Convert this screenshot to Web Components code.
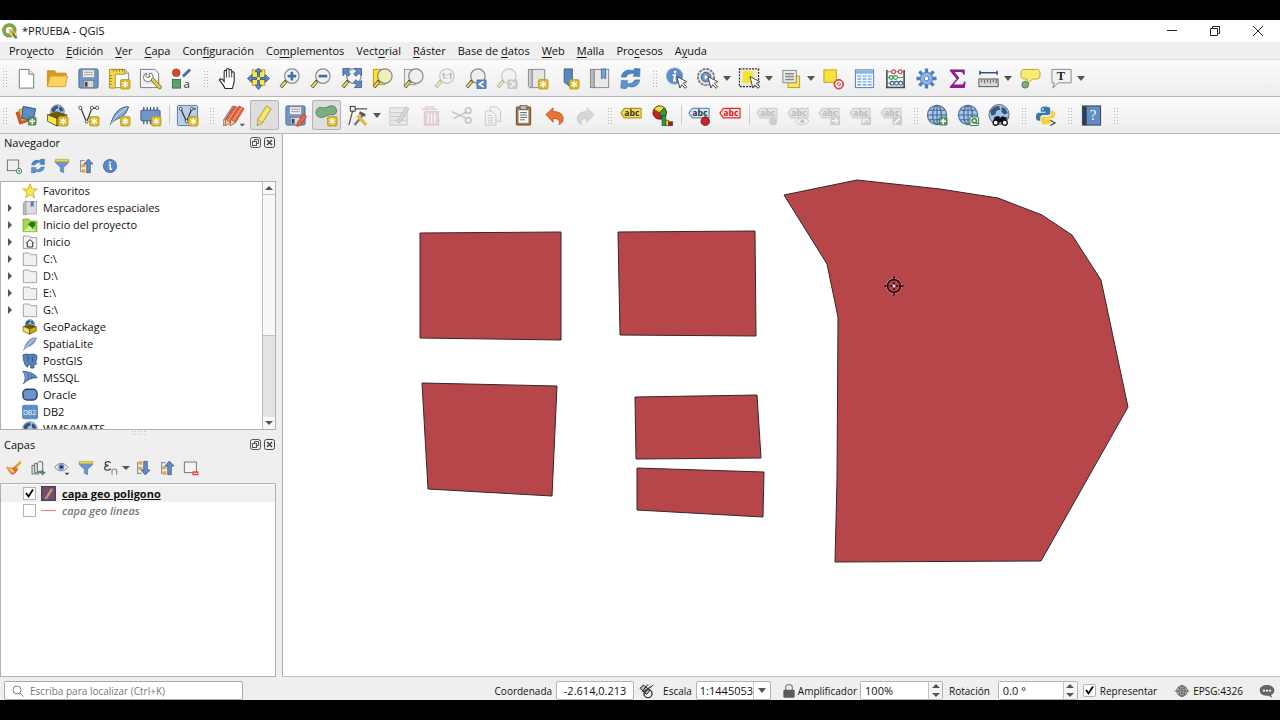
<!DOCTYPE html>
<html lang="es">
<head>
<meta charset="utf-8">
<title>*PRUEBA - QGIS</title>
<style>
  html, body { height: 100%; }
  body { margin: 0; background: #000; font: 11px/16px "Open Sans", "Noto Sans", sans-serif; color: #111; }
</style>
</head>
<body>
<qgis-window>
  <title-bar slot="title">*PRUEBA - QGIS</title-bar>
  <menu-bar slot="menu"></menu-bar>

  <tool-bar slot="tools" label="Proyecto, navegación y atributos">
    <tool-handle first></tool-handle>
    <tool-button icon="newfile" label="Nuevo proyecto"></tool-button>
    <tool-button icon="open" label="Abrir proyecto"></tool-button>
    <tool-button icon="save" label="Guardar proyecto"></tool-button>
    <tool-button icon="layout" label="Nuevo diseño de impresión"></tool-button>
    <tool-button icon="layoutmgr" label="Administrador de diseños"></tool-button>
    <tool-button icon="style" label="Administrador de estilos"></tool-button>
    <tool-handle></tool-handle>
    <tool-button icon="hand" label="Desplazar mapa"></tool-button>
    <tool-button icon="pansel" label="Desplazar a la selección"></tool-button>
    <tool-button icon="zoomin" label="Acercar zum"></tool-button>
    <tool-button icon="zoomout" label="Alejar zum"></tool-button>
    <tool-button icon="zoomfull" label="Zum general"></tool-button>
    <tool-button icon="zoomsel" label="Zum a la selección"></tool-button>
    <tool-button icon="zoomlayer" label="Zum a la capa"></tool-button>
    <tool-button icon="zoomnative" label="Zum a la resolución nativa" disabled></tool-button>
    <tool-button icon="zoomlast" label="Zum anterior"></tool-button>
    <tool-button icon="zoomnext" label="Zum siguiente" disabled></tool-button>
    <tool-button icon="newmap" label="Nueva vista de mapa"></tool-button>
    <tool-button icon="newmark" label="Nuevo marcador espacial"></tool-button>
    <tool-button icon="marks" label="Mostrar marcadores"></tool-button>
    <tool-button icon="refresh" label="Actualizar"></tool-button>
    <tool-handle></tool-handle>
    <tool-button icon="identify" label="Identificar objetos"></tool-button>
    <tool-button icon="action" label="Ejecutar acción" menu></tool-button>
    <tool-button icon="select" label="Seleccionar objetos" menu></tool-button>
    <tool-button icon="selform" label="Seleccionar por valor" menu></tool-button>
    <tool-button icon="deselect" label="Deseleccionar todo"></tool-button>
    <tool-button icon="table" label="Abrir tabla de atributos"></tool-button>
    <tool-button icon="abacus" label="Calculadora de campos"></tool-button>
    <tool-button icon="gear" label="Caja de herramientas"></tool-button>
    <tool-button icon="sigma" label="Resumen estadístico"></tool-button>
    <tool-button icon="measure" label="Medir línea" menu></tool-button>
    <tool-button icon="tips" label="Avisos del mapa"></tool-button>
    <tool-button icon="annot" label="Anotación de texto" menu></tool-button>
  </tool-bar>

  <tool-bar slot="tools" label="Fuentes de datos, digitalización y etiquetas">
    <tool-handle first></tool-handle>
    <tool-button icon="datasrc" label="Administrador de fuentes de datos"></tool-button>
    <tool-button icon="newgpkg" label="Nueva capa GeoPackage"></tool-button>
    <tool-button icon="newshp" label="Nueva capa shape"></tool-button>
    <tool-button icon="newspl" label="Nueva capa SpatiaLite"></tool-button>
    <tool-button icon="newmem" label="Nueva capa temporal"></tool-button>
    <tool-split></tool-split>
    <tool-button icon="newvirt" label="Nueva capa virtual"></tool-button>
    <tool-handle></tool-handle>
    <tool-button icon="edits" label="Ediciones actuales"></tool-button>
    <tool-button icon="pencil" label="Conmutar edición" checked></tool-button>
    <tool-button icon="saveedit" label="Guardar cambios de la capa"></tool-button>
    <tool-button icon="addpoly" label="Añadir polígono" checked></tool-button>
    <tool-button icon="vertex" label="Herramienta de vértices" menu></tool-button>
    <tool-button icon="modattr" label="Modificar atributos" disabled></tool-button>
    <tool-button icon="trash" label="Borrar lo seleccionado" disabled></tool-button>
    <tool-button icon="cut" label="Cortar objetos" disabled></tool-button>
    <tool-button icon="copy" label="Copiar objetos" disabled></tool-button>
    <tool-button icon="paste" label="Pegar objetos"></tool-button>
    <tool-button icon="undo" label="Deshacer"></tool-button>
    <tool-button icon="redo" label="Rehacer" disabled></tool-button>
    <tool-handle></tool-handle>
    <tool-button icon="label" label="Opciones de etiquetado"></tool-button>
    <tool-button icon="diagram" label="Opciones de diagramas"></tool-button>
    <tool-split></tool-split>
    <tool-button icon="labelpin" label="Resaltar etiquetas fijadas"></tool-button>
    <tool-button icon="labelred" label="Etiquetas sin colocar"></tool-button>
    <tool-split></tool-split>
    <tool-button icon="lpin" label="Fijar etiquetas" disabled></tool-button>
    <tool-button icon="leye" label="Mostrar etiquetas" disabled></tool-button>
    <tool-button icon="lmove" label="Mover etiqueta" disabled></tool-button>
    <tool-button icon="lrot" label="Rotar etiqueta" disabled></tool-button>
    <tool-button icon="ledit" label="Cambiar etiqueta" disabled></tool-button>
    <tool-handle></tool-handle>
    <tool-button icon="webadd" label="MetaSearch: añadir"></tool-button>
    <tool-button icon="websearch" label="MetaSearch: buscar"></tool-button>
    <tool-button icon="metasearch" label="MetaSearch"></tool-button>
    <tool-handle></tool-handle>
    <tool-button icon="python" label="Consola de Python"></tool-button>
    <tool-handle></tool-handle>
    <tool-button icon="help" label="Ayuda"></tool-button>
    <tool-handle></tool-handle>
  </tool-bar>

  <dock-panel slot="docks" heading="Navegador" class="browser">
    <mini-button slot="tools" icon="addlayer" label="Añadir capas"></mini-button>
    <mini-button slot="tools" icon="refresh" label="Actualizar"></mini-button>
    <mini-button slot="tools" icon="filter" label="Filtrar"></mini-button>
    <mini-button slot="tools" icon="collapse" label="Comprimir todo"></mini-button>
    <mini-button slot="tools" icon="info" label="Propiedades"></mini-button>
    <browser-tree></browser-tree>
  </dock-panel>
  <dock-panel slot="docks" heading="Capas">
    <mini-button slot="tools" icon="brush" label="Estilo de capa"></mini-button>
    <mini-button slot="tools" icon="addgroup" label="Añadir grupo"></mini-button>
    <mini-button slot="tools" icon="eye" label="Temas del mapa"></mini-button>
    <mini-button slot="tools" icon="filter" label="Filtrar leyenda"></mini-button>
    <mini-button slot="tools" icon="epsilon" label="Filtrar por expresión" menu></mini-button>
    <mini-button slot="tools" icon="expand" label="Expandir todo"></mini-button>
    <mini-button slot="tools" icon="collapse" label="Comprimir todo"></mini-button>
    <mini-button slot="tools" icon="remove" label="Eliminar capa"></mini-button>
    <layer-tree></layer-tree>
  </dock-panel>

  <map-canvas slot="map"></map-canvas>
  <status-bar slot="status"></status-bar>
</qgis-window>

<script>
const badge = '<rect x="13" y="13" width="10" height="10" rx="1.5" fill="#d9b92c" stroke="#b8961a" stroke-width=".8"/><path d="M18 14.5v7M15 16.200l6 3.600M15 19.800l6-3.600" stroke="#fff" stroke-width="1.4"/>';
const plus = '<rect x="14" y="14" width="8" height="8" rx="1" fill="#5a9a62" stroke="#2f6a3a" stroke-width=".7"/><path d="M18 15v6M15 18h6" stroke="#fff" stroke-width="1.6"/>';
const lens = (fill, extra = '') => `<path d="M9 14l-6 7" stroke="#3a3a2a" stroke-width="3.6"/><path d="M8 15.5l-4.800 5" stroke="#f0dc4e" stroke-width="2.2"/><circle cx="14.5" cy="9.5" r="7.500" fill="${fill}" stroke="#8a8a8a" stroke-width="1.3"/>${extra}`;
const tag = (fill, stroke, ink) => `<path d="M1 9.5L4.500 4.500H22V14.500H4.500Z" fill="${fill}" stroke="${stroke}" stroke-width="1.200" stroke-linejoin="round"/><text x="4.500" y="12.500" font-size="9" font-weight="700" fill="${ink}" font-family="Open Sans, sans-serif">abc</text>`;
const globe = '<circle cx="11.5" cy="11.5" r="10" fill="#a9c8e8" stroke="#5a78a0" stroke-width="1.3"/><ellipse cx="11.5" cy="11.5" rx="4.5" ry="10" fill="none" stroke="#3f6492" stroke-width="1.2"/><path d="M11.5 1.500v20M1.500 11.5h20M3.500 6.5h16M3.500 16.5h16" stroke="#3f6492" stroke-width="1.1"/>';
const earth = (cx, cy, r) => `<circle cx="${cx}" cy="${cy}" r="${r}" fill="#a7c3e4" stroke="#35557f" stroke-width=".8"/><g transform="translate(${cx} ${cy}) scale(${r / 8})" fill="#35557f"><path d="M-7-3l3-3 4-1 1 3-3 1-1 3-3 1zM2-6l3 1 2 4-3 1-2-2zM-4 2l4-1 2 3-3 4-3-2zM4 2l3 0-2 4-2-1z"/></g>`;
const box3d = '<path d="M2 11l9.5-3.5L21 11v7l-9.5 5L2 18z" fill="#6b5a10"/><path d="M1.500 11l10 4v8l-10-5z" fill="#f6e54a" stroke="#4a3f10" stroke-width=".8"/><path d="M21.500 11l-10 4v8l10-5z" fill="#c9a914" stroke="#4a3f10" stroke-width=".8"/>';
const feather = '<path d="M2.5 21.5C5 15 7 8 14 4.5c3-1.5 6-2 7.5-1.500C20 6 20 9 15.5 12.5 12 15.5 8 14.5 2.5 21.5z" fill="#87a9d3" stroke="#35557f" stroke-width="1"/><path d="M3 21C8 13 13 8 20 4" stroke="#e6eef8" fill="none" stroke-width=".9"/>';
const cursor = '<path d="M12.5 10l3 12 2-3.5 3.5 3.800 1.600-1.600-3.600-3.600 3.700-1.800z" fill="#fff" stroke="#444" stroke-width="1"/>';
const pen = (a, b, x = 0) => `<g transform="translate(${x})"><path d="M5 16L14 2 19 5 10 19.500 4.500 22.500z" fill="${a}" stroke="${b}" stroke-width=".8"/><path d="M7.500 17.500L16.500 4" stroke="#fff" stroke-opacity=".4" stroke-width="1.200"/><path d="M5 16l5 3.500-5.500 3z" fill="#e8d3b4" stroke="${b}" stroke-width=".5"/></g>`;
const floppy = '<rect x="2" y="2" width="20" height="20" rx="1.5" fill="#6f96c6" stroke="#4b6c99"/><rect x="6" y="3" width="12" height="8" fill="#efefef" stroke="#888" stroke-width=".6"/><path d="M7.5 5.5h9M7.5 8h9" stroke="#999" stroke-width="1"/><rect x="6.5" y="14" width="11" height="7.5" fill="#d9d9d9" stroke="#666" stroke-width=".6"/><rect x="8" y="15.5" width="3" height="5" fill="#3c4a5e"/>';
const arrowsCycle = '<path d="M2.500 10.5C3 5 9 1.500 14.500 4l2-2.500 5.500.500-.500 8-7-.500 2-2.300C13 5.800 9 7 7.500 10.5z" fill="#4f86c6" stroke="#3a69a6" stroke-width=".7"/><path d="M21.500 13.5C21 19 15 22.500 9.500 20l-2 2.500L2 22l.500-8 7 .500-2 2.300c3.500 1.400 7.500.2 9-3.300z" fill="#5d93d2" stroke="#3a69a6" stroke-width=".7"/>';
const editTile = '<rect x="13" y="13" width="10" height="9" fill="#999"/>';
const greyTag = tag('#ccc', '#999', '#666');

const ICONS = {
  logo: '<circle cx="11" cy="11" r="8" fill="none" stroke="#5e9140" stroke-width="5.5"/><circle cx="11" cy="11" r="8" fill="none" stroke="#8cb035" stroke-width="3"/><path d="M11 10h5l6 6v6h-5l-6-6z" fill="#f4efc9" stroke="#6f8f2c" stroke-width=".6"/><path d="M12 11h4l4 4v4h-3l-5-5z" fill="#e8a02c"/><path d="M16 16l6 7" stroke="#4d8a3a" stroke-width="3"/>',
  newfile: '<path d="M4.5 2.500h10l5 5v14.500h-15z" fill="#fff" stroke="#777"/><path d="M14.5 2.5v5h5" fill="#eee" stroke="#777"/>',
  open: '<path d="M1.500 20.500V4h7.500l2 2.5h10v4" fill="#d79b25" stroke="#c88f22"/><path d="M1.500 20.500l3-11h18L20 20.500z" fill="#fcd35e" stroke="#d9a12c"/>',
  save: floppy,
  layout: '<path d="M3.5 2.5h14l4 4v15h-18z" fill="#fff" stroke="#888"/><path d="M17.5 2.5v4h4" fill="none" stroke="#888"/><path d="M1.500 2.5h16v5h-10v14.500h-6z" fill="#f5d94d" stroke="#b0902a"/><path d="M6 2.5v2.5M9 2.5v2.5M12 2.5v2.5M15 2.5v2.5M2 9h2.5M2 12h2.5M2 15h2.5M2 18h2.500" stroke="#8a6d14" stroke-width=".8"/>' + badge,
  layoutmgr: '<path d="M1.500 2.5h15l4 4v15h-19z" fill="#f6f6f6" stroke="#777"/><path d="M4 5h11v13H4z" fill="#e8e8ee"/><path d="M12 11l9.500 10" stroke="#8d7a2a" stroke-width="4.5" stroke-linecap="round"/><path d="M14 13l7.500 8" stroke="#e6cc55" stroke-width="2.6" stroke-linecap="round"/><path d="M8 6.5a4.5 4.5 0 1 0 5.5 5.5l1.5-1.5-2-4-2.500.500 1 3-2.500 1.500-2-2z" fill="#fff" stroke="#666" stroke-width=".9"/>',
  style: '<circle cx="6.5" cy="6" r="4" fill="#d14a2a" stroke="#a33" stroke-width=".8"/><path d="M13.500 10l7.500-7.500" stroke="#4a6fa5" stroke-width="3"/><rect x="2.5" y="13" width="8.500" height="9" fill="#5ea06a" stroke="#39774a"/><text x="14" y="22" font-size="12" fill="#333" font-family="Open Sans, sans-serif">a</text>',
  hand: '<path d="M8 22.5C6.5 19 4 16 2 13.5c1-2 3.500-1 5 1.500V5c0-2 2.5-2 2.5 0V3c0-2 2.700-2 2.700 0v1c0-2 2.700-1.800 2.700.2v2c0-1.800 2.600-1.600 2.600.2V14c0 3-1 5-2 8.500z" transform="translate(1.5)" fill="#fff" stroke="#222" stroke-width="1.1"/><path d="M11 5v6M13.7 4v7M16.4 6v5" stroke="#222" stroke-width=".9"/>',
  pansel: '<rect x="5.5" y="3" width="13" height="16" fill="#f8e84b" stroke="#b59d1c"/><path d="M12 1l3.5 4H13v5h-2V5H8.5zM12 23.500l3.5-4.500H13v-5h-2v5H8.5zM.5 12l4.500-4V11h5v2H5v3zM23.500 12L19 8V11h-5v2h5v3z" fill="#5f8cc4" stroke="#2f5588" stroke-width=".9"/>',
  zoomin: lens('#eef1f5', '<path d="M14.5 5v9M10 9.5h9" stroke="#3f6fae" stroke-width="2.8"/>'),
  zoomout: lens('#eef1f5', '<path d="M10 9.5h9" stroke="#3f6fae" stroke-width="2.8"/>'),
  zoomfull: lens('#f3f5f8') + '<path d="M3 1.500h7.500l-2.600 2.800 3 3-2.400 2.400-3-3L3 9zM22.500 1.500h-7.500l2.300 2.800-3 3 2.400 2.400 3-3L22.500 9zM22.500 21.500h-7.500l2.300-2.800-3-3 2.400-2.400 3 3 2.800-2.300z" fill="#5f8cc4" stroke="#2f5588" stroke-width=".8"/>',
  zoomsel: '<rect x="2.5" y="2.500" width="12" height="16" fill="#f8e230" stroke="#b59d1c"/>' + lens('#f2eebb'),
  zoomlayer: '<rect x="2.5" y="2.500" width="12" height="16" fill="#eee" stroke="#999"/>' + lens('#efefef'),
  zoomnative: lens('#efefef', '<text x="8.5" y="13" font-size="8.5" font-weight="700" fill="#555" font-family="Open Sans, sans-serif">1:1</text>'),
  zoomlast: lens('#efefef') + '<rect x="13.5" y="13.5" width="9.5" height="9" fill="#5f8cc4" stroke="#2f5588" stroke-width=".6"/><path d="M20.5 15l-4.5 3 4.5 3" fill="none" stroke="#fff" stroke-width="1.7"/>',
  zoomnext: lens('#efefef') + '<rect x="13.5" y="13.5" width="9.5" height="9" fill="#999" stroke="#666" stroke-width=".6"/><path d="M16 15l4.5 3-4.5 3" fill="none" stroke="#fff" stroke-width="1.7"/>',
  newmap: '<path d="M2.5 2.500h4v19h-2c-1.5 0-2-1-2-2z" fill="#ccc" stroke="#888"/><path d="M6.5 2.500h13v19h-15c1.5 0 2-1 2-2z" fill="#e6e6e6" stroke="#888"/>' + badge,
  newmark: '<path d="M7.5 2h8.500v20l-8.500-6z" fill="#5b86bd" stroke="#3b5f8f"/>' + badge,
  marks: '<rect x="2.5" y="2.500" width="4" height="19" fill="#bbb" stroke="#888"/><rect x="6.5" y="2.500" width="15" height="19" fill="#e9e9e9" stroke="#888"/><path d="M14 2h4.500v10h-1l-1-2-1.500 2h-1z" fill="#7da2d2" stroke="#3b5f8f" stroke-width=".8"/>',
  refresh: arrowsCycle,
  identify: '<circle cx="10" cy="9.5" r="8.500" fill="#5f8cc4" stroke="#8aa9cf"/><path d="M10.5 4v2.500" stroke="#fff" stroke-width="2.500"/><path d="M8 8.5h2.5l-1 5.5h2" fill="none" stroke="#fff" stroke-width="2"/>' + cursor,
  action: '<circle cx="10.500" cy="10.5" r="8.5" fill="#e4e4e4" stroke="#777" stroke-width="1.8" stroke-dasharray="3 1"/><circle cx="10.500" cy="10.5" r="5" fill="#6f96c6" stroke="#3b5f8f"/><path d="M9 8l4 2.5-4 2.5z" fill="#fff"/>' + cursor,
  select: '<rect x="1.500" y="2" width="20" height="18.500" fill="#efeae0" stroke="#222" stroke-width="1.2" stroke-dasharray="2 1.3"/><path d="M5 4.5h11v12H5z" fill="#f8e230"/>' + cursor,
  selform: '<rect x="8.5" y="9.5" width="12" height="12" fill="#f8e95a" stroke="#b59d1c"/><rect x="3" y="3.500" width="14" height="13" fill="#e9e9e9" stroke="#888"/><path d="M5.5 7h9M5.5 10h9M5.5 13h9" stroke="#888" stroke-width="1.6"/>',
  deselect: '<rect x="2" y="3" width="13" height="13" fill="#f8e23c" stroke="#c0a41c"/><circle cx="17.5" cy="18" r="5" fill="#e05a5e" stroke="#c33a3e"/><circle cx="17.5" cy="18" r="3" fill="none" stroke="#fff" stroke-width="1.1"/><path d="M15.5 20l4-4" stroke="#fff" stroke-width="1.2"/>',
  table: '<rect x="2.5" y="3" width="19" height="18.500" fill="#f3f8fd" stroke="#4f7fb5"/><path d="M3 3.500h18v3.500H3z" fill="#8fb4de"/><path d="M4.5 9.5h4M4.5 12.5h4M4.5 15.5h4M4.5 18.5h4M10 9.5h4M10 12.5h4M10 15.5h4M10 18.5h4M15.5 9.5h4M15.5 12.5h4M15.5 15.5h4M15.5 18.5h4" stroke="#7ea6d4" stroke-width="1.5"/>',
  abacus: '<path d="M3 3v19M21 3v19M2 21.5h20" stroke="#444" stroke-width="1.6"/><path d="M3 5h18M3 11h18M3 17h18" stroke="#777" stroke-width="1"/><g fill="#f5f5f5" stroke-width="1.2"><g stroke="#d13b3b"><circle cx="10" cy="5" r="2"/><circle cx="17" cy="5" r="2"/></g><g stroke="#2f9b4e"><circle cx="7.5" cy="11" r="2"/><circle cx="12" cy="11" r="2"/></g><g stroke="#3b5f8f"><circle cx="8.5" cy="17" r="2"/><circle cx="13" cy="17" r="2"/><circle cx="17.5" cy="17" r="2"/></g></g>',
  gear: '<g stroke="#4b7fc0" stroke-width="3.4"><path d="M12 1.500v21M1.500 12h21M4.500 4.500l15 15M19.500 4.500l-15 15"/></g><circle cx="12" cy="12" r="6.5" fill="#8fb4e3" stroke="#4b7fc0"/><circle cx="12" cy="12" r="2.5" fill="#fff" stroke="#4b7fc0"/>',
  sigma: '<path d="M4 2.500h15.500V8H18c-.5-2-1-2.800-3-2.800H9l5 6.300-6 6.800h7.5c2 0 2.800-1 3.500-3.300h1.500L19.500 22H4v-1.500l7-8L4 4z" fill="#8f1b8f"/>',
  measure: '<path d="M3 6h18M3 4v4M21 4v4" stroke="#35557f" stroke-width="1.6"/><rect x="2" y="12.5" width="20" height="8" fill="#d8d8d8" stroke="#555"/><path d="M5 13v3M8 13v4M11 13v3M14 13v4M17 13v3M20 13v4" stroke="#555"/>',
  tips: '<path d="M5.500 2.500h13c3 0 3.500 2 3.5 5s-.5 5-3.500 5H14L8.500 18v-5.500h-3C2.500 12.500 2 10.5 2 7.500s.5-5 3.500-5z" fill="#faea74" stroke="#b5a13a"/><circle cx="6.5" cy="18.500" r="3.5" fill="#7fb07c" stroke="#4c7a4b"/>',
  annot: '<path d="M2 2.500h20v14H8.500L3 22l1.500-5.500H2z" fill="#f2f2f2" stroke="#888"/><text x="7" y="14" font-size="13" fill="#222" font-weight="700" font-family="Liberation Serif, serif">T</text>',
  datasrc: '<path d="M1 9l9-3 4 12-9 3z" fill="#d9552c" stroke="#a33c1a" stroke-width=".7"/><path d="M4 6l9-2.500 3 12L7 18z" fill="#eec13c" stroke="#a9831c" stroke-width=".7"/><path d="M8.500 2.500l13 2.500-2.500 12-12-2z" fill="#5f8cc4" stroke="#2f5588"/>' + plus,
  newgpkg: earth(12, 8, 7) + box3d + badge,
  gpkg: earth(12, 8, 7) + box3d,
  newshp: '<path d="M4 4.5l6 14.5L15.5 4.5h6" fill="none" stroke="#333" stroke-width="1.2"/><g fill="#fff" stroke="#555"><circle cx="3.500" cy="4" r="1.700"/><circle cx="15.500" cy="4" r="1.700"/><circle cx="21" cy="4" r="1.700"/><circle cx="10" cy="18.500" r="1.5"/></g>' + badge,
  newspl: feather + badge,
  feather,
  newmem: '<path d="M5 3v18M8.5 3v18M12 3v18M15.5 3v18M19 3v18" stroke="#35557f" stroke-width="1.300"/><rect x="2" y="6.5" width="20" height="11" rx="1" fill="#6f96c6" stroke="#3b5f8f"/>' + badge,
  newvirt: '<rect x="1.5" y="1.500" width="21" height="21" rx="1" fill="#b6d0ec" stroke="#5a7ca8"/><path d="M5 5l6 13.500L16.5 5h4" fill="none" stroke="#333" stroke-width="1.3"/><g fill="#fff" stroke="#444"><circle cx="5" cy="5" r="1.5"/><circle cx="16.5" cy="5" r="1.5"/><circle cx="11" cy="18" r="1.5"/></g>' + badge,
  edits: pen('#a9a9a9', '#777', -3) + pen('#e0673a', '#b5441c', -1) + pen('#e0673a', '#b5441c', 4) + '<path d="M18.500 20.500h5.500l-2.800 3z" fill="#555"/>',
  pencil: pen('#f0e05c', '#a08a2a'),
  saveedit: floppy + '<path d="M14 19.500l6-9 3.500 2.500-6 9-4 1.500z" fill="#e9673c" stroke="#a33c1a" stroke-width=".7"/>',
  addpoly: '<path d="M1.500 11C0 5 4.500 2.500 8.500 4c3.500 1 5.500-2.500 9.500-2 5 .5 5.500 6.500 3 8.500-2.500 1.500-5-.5-8.5 1.500-3.500 2.500-9 3-11-1z" fill="#7cae83" stroke="#4f7f58"/>' + badge,
  vertex: '<path d="M3 22L7 7M8 5h14" stroke="#555" stroke-width="1.3"/><rect x="4.500" y="2.500" width="5" height="5" fill="#eee" stroke="#333"/><path d="M9 22l9-11" stroke="#777" stroke-width="2.400"/><path d="M12 12l9 10" stroke="#e8b93a" stroke-width="3.400"/><path d="M14 9l6 3" stroke="#555" stroke-width="3"/>',
  modattr: '<rect x="2" y="4" width="18" height="18" fill="#ddd" stroke="#888"/><path d="M3 9h16M3 13h16M3 17h16" stroke="#888"/><path d="M9 18L19 3l3 2-10 15z" fill="#aaa" stroke="#777"/>',
  trash: '<path d="M3 5.500h16M7 5V3h8v2" fill="none" stroke="#c58a90" stroke-width="1.5"/><rect x="5.500" y="8" width="15" height="14" fill="#d7a4aa" stroke="#b57f86"/><path d="M9.5 10v10M13 10v10M16.5 10v10" stroke="#fff" stroke-width="1.3"/>',
  cut: '<path d="M2 8l14 6.500M4 15l14-7" stroke="#777" stroke-width="1.5"/><circle cx="19" cy="7" r="3" fill="none" stroke="#777" stroke-width="1.5"/><circle cx="19" cy="17" r="3" fill="none" stroke="#777" stroke-width="1.5"/>',
  copy: '<path d="M9.5 3h7l4 4v11h-11z" fill="#eee" stroke="#888"/><path d="M4.5 7.5h7l4 4v10.500h-11z" fill="#f4f4f4" stroke="#888"/><path d="M7 12h5M7 14.5h6M7 17h6M7 19.500h6" stroke="#888"/>',
  paste: '<rect x="4.5" y="3" width="15" height="19" rx="1" fill="#a8763a" stroke="#6f4a1d"/><path d="M6.5 6h11v14h-11z" fill="#fff" stroke="#777" stroke-width=".6"/><rect x="8.5" y="1.500" width="7" height="4.500" fill="#bbb" stroke="#555" stroke-width=".8"/><path d="M8.5 9h7M8.5 11.5h7M8.5 14h7M8.5 16.5h5" stroke="#555"/>',
  undo: '<path d="M3 11l7.500-7v4c7-.5 10.5 3 10.5 7.5 0 3-1.5 5-4.5 6 2-3.5 0-6.5-6-6.500v4z" fill="#e8743a" stroke="#b54f1c" stroke-width=".8"/>',
  redo: '<path d="M21 11l-7.500-7v4C7 7.5 3.5 11 3.5 15.5c0 3 1.5 5 4.5 6-2-3.5 0-6.500 5.500-6.500v4z" fill="#aaa" stroke="#888" stroke-width=".8"/>',
  label: tag('#f3df4a', '#b39a1e', '#333'),
  diagram: '<circle cx="9" cy="9" r="7" fill="#c62424" stroke="#400" stroke-width=".7"/><path d="M9 9L3 5.500A7 7 0 0 1 14 4z" fill="#f2e026" stroke="#333" stroke-width=".6"/><path d="M9 9l5-5a7 7 0 0 1-2.500 11.500z" fill="#2fa03a" stroke="#222" stroke-width=".6"/><path d="M11.500 12h4v10.500h-4z" fill="#2fa03a" stroke="#222" stroke-width=".6"/><path d="M15.5 17h3v5.500h-3z" fill="#f2e026" stroke="#222" stroke-width=".6"/><path d="M18.500 18.5h4v4h-4z" fill="#b51c1c" stroke="#222" stroke-width=".6"/>',
  labelpin: tag('#dbe8f6', '#5f8cc4', '#223344') + '<path d="M18 10v6" stroke="#777" stroke-width="2"/><circle cx="18" cy="18" r="4.300" fill="#c2252b" stroke="#8a1519"/>',
  labelred: tag('#fbdcdc', '#dc2a30', '#d42027'),
  lpin: greyTag + '<circle cx="18" cy="18" r="4.300" fill="#999"/>',
  leye: greyTag + '<path d="M9 18c4-5 10-5 14 0-4 5-10 5-14 0z" fill="#eee" stroke="#888"/><circle cx="16" cy="18" r="2" fill="#777"/>',
  lmove: greyTag + editTile + '<path d="M14.5 17.5h6M18 15l2.500 2.500L18 20" stroke="#fff" stroke-width="1.5" fill="none"/>',
  lrot: greyTag + editTile + '<path d="M15.5 20c-1-5 5-6 5-1.500M15 15v3h3" stroke="#fff" stroke-width="1.3" fill="none"/>',
  ledit: greyTag + editTile + '<path d="M15 20.5l5.5-5.5" stroke="#fff" stroke-width="2"/>',
  webadd: globe + plus,
  websearch: globe + '<rect x="13.5" y="13.5" width="9" height="9" rx="1" fill="#e6f2e4" stroke="#3d7d48"/><circle cx="18" cy="17.5" r="2.300" fill="none" stroke="#3d7d48" stroke-width="1.300"/><path d="M19.5 19l2 2" stroke="#3d7d48" stroke-width="1.3"/>',
  metasearch: earth(11.5, 11, 10.5) + '<path d="M5 18l3-5h3l1.5 2L14 13h3l3.500 5c1 2.5 0 4.5-2.5 5-2.5 0-4-1.5-4.500-4h-1.500c-.5 2.5-2 4-4.500 4-2.500-.5-3.500-2.500-2.500-5z" fill="#111"/><circle cx="8" cy="19.5" r="2" fill="#fff"/><circle cx="17.5" cy="19.5" r="2" fill="#fff"/>',
  python: '<path d="M11.5 2.500c-4 0-4.500 1.500-4.500 3v2.500h5v1H5c-2 0-3 2-3 4.500s1 4 3 4h1.500v-3c0-2 1.500-3 3-3h5c1.500 0 2.500-1 2.500-2.500V5.500c0-2-1.500-3-5.500-3z" fill="#3b78ae"/><circle cx="9.2" cy="5.3" r=".9" fill="#fff"/><path d="M12.5 21.5c4 0 4.500-1.500 4.500-3V16h-5v-1h7c2 0 3-1.500 3-4s-1-4-3-4h-1.200v3c0 2-1.300 3-2.800 3h-5C8.500 13 7.500 14 7.500 15.500v3c0 2 1 3 5 3z" fill="#f8d03e"/><path d="M17 17l5 2.800-5 2.700" fill="none" stroke="#444" stroke-width="1.200"/>',
  help: '<rect x="2.5" y="2" width="19" height="20" fill="#5f8cc4" stroke="#333f52"/><path d="M3 2.500h4V22H3z" fill="#2c3e57"/><text x="10.5" y="17" font-size="15" fill="#fff" font-family="Liberation Serif, serif">?</text>',

  addlayer: '<rect x="2" y="3" width="17" height="16" fill="none" stroke="#666" stroke-width="1.3"/><circle cx="19.500" cy="19.500" r="4" fill="#fff" stroke="#4d8c57" stroke-width="1.500"/><path d="M19.500 17.500v4M17.500 19.500h4" stroke="#4d8c57" stroke-width="1.3"/>',
  filter: '<path d="M2 3h20v4l-7.500 7v8l-5-2v-6L2 7z" fill="#6d94c6" stroke="#476c9e" stroke-width=".8"/><path d="M2 2h20v3.500H2z" fill="#e8d94c" stroke="#b5a43a" stroke-width=".8"/>',
  collapse: '<path d="M4 3v18M4 4h6M4 12h5M4 20h6" stroke="#888" stroke-width="1.5" fill="none"/><path d="M6 9h5v5H6zM6 17h5v5H6z" fill="#e8a93a"/><path d="M15.5 1.5l7 7.500h-4V22h-5.500V9H9z" fill="#5f8cc4" stroke="#2f5588"/>',
  expand: '<path d="M4 3v18M4 4h6M4 12h5M4 20h6" stroke="#888" stroke-width="1.5" fill="none"/><path d="M6 2h5v5H6zM6 10h5v5H6z" fill="#e8a93a"/><path d="M15.5 22.500l7-7.500h-4V2h-5.500v13H9z" fill="#5f8cc4" stroke="#2f5588"/>',
  info: '<circle cx="12" cy="12" r="10" fill="#5588c8" stroke="#3b5f8f"/><path d="M12 5.500v2.500" stroke="#fff" stroke-width="3"/><path d="M10 10.5h2.5V17H15" stroke="#fff" stroke-width="2.2" fill="none"/>',
  brush: '<path d="M13 12l8-8" stroke="#e0a23a" stroke-width="4" stroke-linecap="round"/><path d="M1 11l8 1 5-2 4 4c-2 4-5 7-9 8-3-3-6-6-8-11z" fill="#e0703a" stroke="#d98a4c"/><path d="M2 12l7 1 4 5-4 1z" fill="#f5cf5a"/>',
  addgroup: '<rect x="3" y="8" width="10" height="13" fill="#ddd" stroke="#666" stroke-width="1.3"/><rect x="7" y="5" width="10" height="14" fill="#ddd" stroke="#666" stroke-width="1.3"/><path d="M11 17V5l3-3 5 1v14z" fill="#eee" stroke="#555" stroke-width="1.3"/><path d="M19 15v8M15 19h8" stroke="#4d8c57" stroke-width="2.6"/>',
  eye: '<path d="M1 11c6-8 14-8 20 0-6 7-14 7-20 0z" fill="#e9edf2" stroke="#777" stroke-width="1.3"/><circle cx="11" cy="10.5" r="4.5" fill="#5f8cc4"/><circle cx="11" cy="10.5" r="2" fill="#222233"/><path d="M16 19h7l-3.500 4z" fill="#444"/>',
  epsilon: '<path d="M13 4c-4-3-9-1-8 2 .5 2 3 2.500 5 2.500-4 0-6.500 1.500-6 4 .5 3.500 6 3.500 9 .5" fill="none" stroke="#444" stroke-width="2"/><path d="M15 22v-6c0-3 7-3 7 0v6" fill="none" stroke="#999" stroke-width="2"/>',
  remove: '<rect x="2" y="3" width="18" height="16" fill="#f4f4f4" stroke="#666" stroke-width="1.3"/><rect x="14" y="17" width="9" height="6" rx="1" fill="#dc4a50"/><path d="M16 20h5" stroke="#fff" stroke-width="1.3"/>',

  star: '<path d="M12 1l3 8h8l-6.500 5 2.500 8.500-7-5-7 5L7.500 14 1 9h8z" fill="#f8ea4a" stroke="#c9a524" stroke-width="1.2"/>',
  bookmark: '<path d="M2 5l3-3h5v17l-3 3H2z" fill="#bbb" stroke="#888"/><rect x="6" y="2" width="16" height="19" fill="#dcdce2" stroke="#999"/><path d="M13 2h4.500v9l-2-2-2.500 2z" fill="#5f78b0"/>',
  projhome: '<path d="M1.500 3h8.500l2 3h10.500v16h-21z" fill="#a4d84a" stroke="#6d9c2a"/><path d="M2 21.500l9-8 10 8z" fill="#d8f29a"/><path d="M9 11l5-4 6 1v5l-4 3v3l-2-4z" fill="#1c7a1c"/>',
  home: '<path d="M2 3h9l2 2.500h9V22H2z" fill="#f2f2f2" stroke="#888" stroke-width="1.2"/><path d="M6 14l6-5.500 6 5.500M8 13v6.500h8V13" fill="none" stroke="#333" stroke-width="1.5"/>',
  folder: '<path d="M2 3h9l2 2.500h9V22H2z" fill="#f0f0f0" stroke="#999" stroke-width="1.3"/>',
  postgis: '<path d="M1.500 3c3-2 6-1.500 9-.5 4-1.500 8.500-1 11.500 1 1 3 0 8-2 11l2.500 1c-1 2-3 2-4.500 2v5h-5v-6l-3 1-2 4c-3.500-2-6-9-6.500-18.500z" fill="#5585bb" stroke="#2d4e7a" stroke-width="1.2"/><path d="M9 4v9M16 5c-2 3 1 5 0 9" stroke="#2d4e7a" stroke-width="1.3" fill="none"/>',
  mssql: '<path d="M1 2c9 0 18 3 22 10-8-1-15 2-21 9 4-7 3-14-1-19z" fill="#6f96c6" stroke="#2d4e7a" stroke-width="1"/><path d="M8 4c3 4 3 9 0 13M13 6c2 3 2 5 1 8M18 8v4" stroke="#2d4e7a" fill="none"/>',
  oracle: '<rect x="1.5" y="3.5" width="21" height="16" rx="6" fill="#6d93cc" stroke="#2d4468" stroke-width="2.2"/>',
  db2: '<rect x="0" y="1" width="24" height="22" rx="3" fill="#5f8fc6"/><text x="1.5" y="16" font-size="10" fill="#fff" font-family="Open Sans, sans-serif">DB2</text>',
  wms: earth(12, 12, 11),
  polylayer: '<rect x="0" y="0" width="24" height="24" fill="#4f3a72"/><path d="M2 2h20v20H2z" fill="#7a4a60"/><path d="M6 20L16 4l3 2L9 21z" fill="#c9a06a" stroke="#8a8a9a"/>',
  linelayer: '<path d="M0 12h24" stroke="#e0937c" stroke-width="2"/>',
  search: '<circle cx="10" cy="10" r="8" fill="none" stroke="#777" stroke-width="1.8"/><path d="M16 16l7 7" stroke="#777" stroke-width="2"/>',
  extents: '<path d="M3 8l5-5 10 8-5 6z" fill="#bbb" stroke="#222" stroke-width="1.5"/><path d="M6 13l9-11M9 16l9-11" stroke="#222" stroke-width="1.5"/><circle cx="15" cy="16" r="6" fill="none" stroke="#333" stroke-width="2"/><path d="M17 8l6-5" stroke="#333" stroke-width="1.5"/>',
  lock: '<path d="M7 11V7c0-6 10-6 10 0v4" fill="none" stroke="#888" stroke-width="2"/><rect x="3.500" y="10" width="17" height="12" rx="2" fill="#5a5a5a"/>',
  crs: '<circle cx="12" cy="12" r="8" fill="#bbb" stroke="#777" stroke-width="1.500"/><path d="M1 12h22M12 3v18M6 6c4 4 8 4 12 0M6 18c4-4 8-4 12 0" fill="none" stroke="#666" stroke-width="1.500"/><ellipse cx="12" cy="12" rx="4.500" ry="8" fill="none" stroke="#666" stroke-width="1.500"/>',
  bubble: '<path d="M12 3c7 0 11 3.500 11 8s-3 6-5 7l2 4-6-3c-9 1-13-3-13-8s5-8 11-8z" fill="#666"/><path d="M6 11.500h3M10.500 11.500h3M15 11.500h3" stroke="#fff" stroke-width="2.500"/>'
};

class ShadowElement extends HTMLElement {
  connectedCallback() {
    if (this.shadowRoot) return;
    const root = this.attachShadow({ mode: 'open' });
    const tpl = document.createElement('template');
    tpl.innerHTML = `<style>*{box-sizing:border-box}button,input,select{font:inherit;color:inherit;margin:0}button{padding:0;border:0;background:none}${this.styles()}</style>${this.markup()}`;
    root.append(tpl.content.cloneNode(true));
  }
  styles() { return ''; }
  markup() { return ''; }
}

class GisIcon extends ShadowElement {
  styles() { return ':host{display:block;width:24px;height:24px;flex:none}svg{display:block;width:100%;height:100%}'; }
  markup() { return `<svg viewBox="0 0 24 24" aria-hidden="true">${ICONS[this.getAttribute('name')] || ''}</svg>`; }
}

class QgisWindow extends ShadowElement {
  styles() {
    return `:host{display:flex;flex-direction:column;height:100vh;padding:20px 0;box-sizing:border-box;background:#000}
      main{flex:1;min-height:0;display:flex;flex-direction:column;background:#efefef}
      .work{flex:1;min-height:0;display:flex;gap:6px}
      .docks{width:276px;flex:none;display:flex;flex-direction:column;min-height:0}
      ::slotted(.browser){flex:none;height:302px}
      ::slotted([slot=docks]:not(.browser)){flex:1;min-height:0}
      ::slotted([slot=map]){flex:1;min-width:0}`;
  }
  markup() {
    return `<main><slot name="title"></slot><slot name="menu"></slot><slot name="tools"></slot>
      <div class="work"><div class="docks"><slot name="docks"></slot></div><slot name="map"></slot></div>
      <slot name="status"></slot></main>`;
  }
}

class TitleBar extends ShadowElement {
  styles() {
    return `:host{display:flex;align-items:center;height:22px;flex:none;background:#fff;padding:0 1px 0 2px;box-sizing:border-box}
      gis-icon{width:16px;height:16px;margin-right:4px}span{flex:1}
      button{width:43px;height:20px;display:grid;place-items:center}svg{display:block}`;
  }
  markup() {
    return `<gis-icon name="logo"></gis-icon><span><slot></slot></span>
      <button aria-label="Minimizar"><svg width="12" height="12"><path d="M1 5.500h10" stroke="#222"/></svg></button>
      <button aria-label="Restaurar"><svg width="12" height="12" fill="none" stroke="#222"><path d="M1.500 3.500h7v7h-7zM3.500 3.500v-2h7v7h-2"/></svg></button>
      <button aria-label="Cerrar"><svg width="12" height="12"><path d="M1 1l10 10M11 1L1 11" stroke="#222"/></svg></button>`;
  }
}

class MenuBar extends ShadowElement {
  styles() {
    return `:host{display:block;flex:none;background:#efefef;border-bottom:1px solid #dcdcdc}
      nav{display:flex;gap:12px;height:17px;padding:0 9px;align-items:center}u{text-underline-offset:2px}`;
  }
  markup() {
    const items = ['Pro<u>y</u>ecto', '<u>E</u>dición', '<u>V</u>er', '<u>C</u>apa', 'Con<u>f</u>iguración', 'Co<u>m</u>plementos', 'Vect<u>o</u>rial', '<u>R</u>áster', 'Base de <u>d</u>atos', '<u>W</u>eb', '<u>M</u>alla', 'Pro<u>c</u>esos', 'A<u>y</u>uda'];
    return `<nav>${items.map(i => `<button>${i}</button>`).join('')}</nav>`;
  }
}

class ToolBar extends ShadowElement {
  styles() {
    return `:host{display:flex;flex:none;height:37px;box-sizing:border-box;align-items:center;border-bottom:1px solid #b6b6b6;background:linear-gradient(#fbfbfb,#ededed)}`;
  }
  markup() { return '<slot></slot>'; }
}

class ToolHandle extends ShadowElement {
  styles() {
    return `:host{display:flex;width:15px;flex:none;justify-content:flex-end;padding-right:4px;box-sizing:border-box}:host([first]){width:11px}
      i{width:5px;height:17px;background:radial-gradient(circle,#b5b5b5 0 1px,transparent 1px) 0 0/3px 3px}`;
  }
  markup() { return '<i></i>'; }
}

class ToolSplit extends ShadowElement {
  styles() { return ':host{display:block;width:1px;height:20px;margin:0 2px 0 3px;background:#ccc;flex:none}'; }
}

class ToolButton extends ShadowElement {
  styles() {
    return `:host{display:flex;align-items:center;flex:none}
      button{width:29px;height:30px;margin:0 1px;display:grid;place-items:center;border-radius:2px;border:1px solid transparent}
      :host([checked]) button{background:#dedede;border-color:#b4b4b4}
      :host([disabled]) gis-icon{opacity:.4}
      gis-icon{width:23px;height:23px}
      .more{width:11px;margin:0;height:29px;border:0;place-items:center start}
      .more i{border:4px solid transparent;border-top:5px solid #555;border-bottom:0}`;
  }
  markup() {
    const off = this.hasAttribute('disabled') ? 'disabled' : '';
    const label = this.getAttribute('label');
    return `<button aria-label="${label}" ${off}><gis-icon name="${this.getAttribute('icon')}"></gis-icon></button>` +
      (this.hasAttribute('menu') ? `<button class="more" aria-label="${label}: opciones"><i></i></button>` : '');
  }
}

class MiniButton extends ShadowElement {
  styles() {
    return `:host{display:flex;flex:none;align-items:center}
      button{width:24px;height:24px;display:grid;place-items:center}gis-icon{width:16px;height:16px}
      .more{width:9px;place-items:center start}.more i{border:4px solid transparent;border-top:4px solid #555;border-bottom:0}`;
  }
  markup() {
    const label = this.getAttribute('label');
    return `<button aria-label="${label}"><gis-icon name="${this.getAttribute('icon')}"></gis-icon></button>` +
      (this.hasAttribute('menu') ? `<button class="more" aria-label="${label}: opciones"><i></i></button>` : '');
  }
}

class DockPanel extends ShadowElement {
  styles() {
    return `:host{display:flex;flex-direction:column}
      header{display:flex;align-items:center;height:17px;flex:none;padding:0 1px 0 4px;gap:3px}
      h2{flex:1;margin:0;font-size:11px;font-weight:400}
      header button{width:11px;height:11px}svg{display:block}
      .tools{display:flex;height:30px;flex:none;padding-left:2px}
      .body{flex:1;min-height:0;display:flex}
      ::slotted(:not([slot])){flex:1;min-width:0}
      :host(.browser)::after{content:"";height:6px;width:15px;flex:none;margin:0 auto;background:radial-gradient(circle,#c0c0c0 0 1px,transparent 1px) 0 0/3px 3px}`;
  }
  markup() {
    return `<header><h2>${this.getAttribute('heading')}</h2>
      <button aria-label="Flotar"><svg width="11" height="11" fill="none" stroke="#555"><rect x=".5" y=".5" width="10" height="10" rx="2"/><rect x="2.500" y="4.500" width="4" height="4"/><path d="M4.500 4V2.500h4v4H7"/></svg></button>
      <button aria-label="Cerrar"><svg width="11" height="11" fill="none" stroke="#444"><rect x=".5" y=".5" width="10" height="10" rx="2"/><path d="M3 3l5 5M8 3L3 8" stroke-width="1.500"/></svg></button></header>
      <div class="tools"><slot name="tools"></slot></div><div class="body"><slot></slot></div>`;
  }
}

class BrowserTree extends ShadowElement {
  styles() {
    return `:host{display:flex;background:#fff;border:1px solid #b0b0b0;box-sizing:border-box;overflow:hidden}
      ul{flex:1;margin:0;padding:0;list-style:none;overflow:hidden}
      li{height:17px;line-height:17px;display:flex;align-items:center;padding-left:7px;white-space:nowrap}
      .tw{width:14px;height:9px;display:flex;align-items:center}
      .open{border:4px solid transparent;border-left:4px solid #555;border-right:0}
      gis-icon{width:16px;height:16px;margin-right:5px}
      .bar{width:13px;flex:none;display:grid;grid-template-rows:12px 142fr 81fr 12px;border-left:1px solid #bdbdbd;background:#e3e3e3}
      .bar button,.bar div{background:#f8f8f8;display:grid;place-items:center}
      .bar div{border:solid #c4c4c4;border-width:1px 0}
      .up{border:4px solid transparent;border-bottom:4px solid #555;border-top:0}
      .down{border:4px solid transparent;border-top:4px solid #555;border-bottom:0}`;
  }
  markup() {
    const rows = [['star', 'Favoritos'], ['bookmark', 'Marcadores espaciales', 1], ['projhome', 'Inicio del proyecto', 1], ['home', 'Inicio', 1], ['folder', 'C:\\', 1], ['folder', 'D:\\', 1], ['folder', 'E:\\', 1], ['folder', 'G:\\', 1], ['gpkg', 'GeoPackage'], ['feather', 'SpatiaLite'], ['postgis', 'PostGIS'], ['mssql', 'MSSQL'], ['oracle', 'Oracle'], ['db2', 'DB2'], ['wms', 'WMS/WMTS']];
    return `<ul>${rows.map(([icon, text, kids]) => `<li><span class="tw">${kids ? '<i class="open"></i>' : ''}</span><gis-icon name="${icon}"></gis-icon><span>${text}</span></li>`).join('')}</ul>
      <div class="bar"><button aria-label="Subir"><i class="up"></i></button><div></div><span></span><button aria-label="Bajar"><i class="down"></i></button></div>`;
  }
}

const tickCss = `input[type=checkbox]{appearance:none;width:13px;height:13px;flex:none;border:1px solid #b4b4b4;background:#fff}
  input[type=checkbox]:checked{background:#fff url('data:image/svg+xml,<svg xmlns="http://www.w3.org/2000/svg" viewBox="0 0 11 11"><path d="M2 5l2.500 3.500L9 1.500" fill="none" stroke="black" stroke-width="1.800"/></svg>')}`;

class LayerTree extends ShadowElement {
  styles() {
    return `:host{display:block;background:#fff;border:1px solid #b0b0b0;box-sizing:border-box}
      ul{margin:1px 0 0;padding:0;list-style:none}
      li{height:17px;display:flex;align-items:center;padding-left:22px}
      label{display:flex;align-items:center;height:17px}
      gis-icon{width:15px;height:15px;margin:0 6px 0 5px}
      .on{background:#f0f0f0}.on b{text-decoration:underline}.off{color:#777;font-style:italic;font-weight:600}${tickCss}`;
  }
  markup() {
    return `<ul><li class="on"><label><input type="checkbox" checked><gis-icon name="polylayer"></gis-icon><b>capa geo poligono</b></label></li>
      <li class="off"><label><input type="checkbox"><gis-icon name="linelayer"></gis-icon><span>capa geo lineas</span></label></li></ul>`;
  }
}

class MapCanvas extends ShadowElement {
  styles() {
    return `:host{display:block;background:#fff;border-left:1px solid #b0b0b0;border-bottom:1px solid #c4c4c4;box-sizing:border-box;overflow:hidden}
      svg{display:block;width:100%;height:100%}.f{fill:#b6464a;stroke:#33272b;stroke-width:1}`;
  }
  markup() {
    const shapes = ['420,233 561,232 561,340 420,338', '618,232 755,231 756,336 620,335', '422,383 557,386 552,496 428,489', '635,397 757,395 761,458 636,459', '637,468 764,472 763,517 637,510', '784,195 857,180 940,189 998,198 1042,215 1072,235 1101,280 1128,407 1041,561 835,562 837,480 838,317 827,264'];
    return `<svg viewBox="283 134 997 542" preserveAspectRatio="xMinYMin slice" role="img" aria-label="Mapa">
      ${shapes.map(p => `<polygon class="f" points="${p}"/>`).join('')}
      <g transform="translate(894 286)" fill="none"><circle r="7.500" stroke="#d9a9a0" stroke-width="1"/><circle r="6.500" stroke="#1c0c0e" stroke-width="1.600"/>
      <path d="M0-9.500v4M0 9.500v-4M-9.500 0h4M9.500 0h-4M-4 0h2M2 0h2M0-4v2M0 2v2" stroke="#1c0c0e" stroke-width="1.500"/><circle r="1.200" fill="#fff"/></g></svg>`;
  }
}

class StatusBar extends ShadowElement {
  styles() {
    return `:host{display:flex;flex:none;align-items:center;height:23px;padding:4px 5px 0 4px;box-sizing:border-box;background:#efefef;font-size:10px;white-space:nowrap}
      .find{width:239px;height:19px;display:flex;align-items:center;gap:6px;padding:0 7px;background:#fff;border:1px solid #a9a9a9;border-radius:2px}
      .find gis-icon{width:12px;height:12px}
      input,select{height:19px;border:1px solid #b4b4b4;background:#fff;border-radius:2px;padding:0 4px;min-width:0;font-size:11px}
      .find input{border:0;flex:1;height:17px;padding:0;font-size:10px}.find input::placeholder{color:#777;opacity:1}
      .gap{flex:1}gis-icon{width:16px;height:16px}
      .coord{width:78px;text-align:center;margin:0 4px}
      .ext{margin-right:9px}
      .box{position:relative;display:flex}
      .scale{margin:0 10px 0 4px;width:75px}.scale select{appearance:none;width:100%;padding:0 3px}
      .scale::after{content:"";position:absolute;right:5px;top:7px;border:4px solid transparent;border-top:5px solid #555;border-bottom:0}
      .scale::before{content:"";position:absolute;right:17px;top:1px;height:17px;border-left:1px solid #c4c4c4}
      .spin{height:19px;border:1px solid #b4b4b4;border-radius:2px;background:#fff;display:grid;grid-template:1fr 1fr/1fr 13px}
      .spin input{grid-row:1/3;border:0;height:17px;border-right:1px solid #c4c4c4;border-radius:0}
      .spin button{display:grid;place-items:center;background:#f6f6f6}
      .up{border:4px solid transparent;border-bottom:4px solid #555;border-top:0}
      .down{border:4px solid transparent;border-top:4px solid #555;border-bottom:0}
      .lock{margin-right:1px}
      .mag{width:83px;margin:0 6px 0 3px}.rot{width:80px;margin:0 5px 0 8px}
      .tick{display:flex;align-items:center;gap:4px}${tickCss}
      .tick input{padding:0}
      .crs{display:flex;align-items:center;gap:3px;margin:0 16px 0 17px}`;
  }
  markup() {
    const spin = '<button aria-label="Aumentar"><i class="up"></i></button><button aria-label="Disminuir"><i class="down"></i></button>';
    return `<div class="find"><gis-icon name="search"></gis-icon><input aria-label="Localizador" placeholder="Escriba para localizar (Ctrl+K)"></div>
      <span class="gap"></span>
      <label for="c">Coordenada</label><input id="c" class="coord" value="-2.614,0.213"><button class="ext" aria-label="Extensión"><gis-icon name="extents"></gis-icon></button>
      <label for="s">Escala</label><div class="box scale"><select id="s"><option>1:1445053</option></select></div>
      <button class="lock" aria-label="Bloquear escala"><gis-icon name="lock"></gis-icon></button>
      <label for="m">Amplificador</label><div class="spin mag"><input id="m" value="100%">${spin}</div>
      <label for="r">Rotación</label><div class="spin rot"><input id="r" value="0.0 °">${spin}</div>
      <label class="tick"><input type="checkbox" checked>Representar</label>
      <button class="crs"><gis-icon name="crs"></gis-icon>EPSG:4326</button>
      <button aria-label="Mensajes"><gis-icon name="bubble"></gis-icon></button>`;
  }
}

Object.entries({
  'gis-icon': GisIcon, 'qgis-window': QgisWindow, 'title-bar': TitleBar, 'menu-bar': MenuBar, 'tool-bar': ToolBar,
  'tool-handle': ToolHandle, 'tool-split': ToolSplit, 'tool-button': ToolButton, 'mini-button': MiniButton,
  'dock-panel': DockPanel, 'browser-tree': BrowserTree, 'layer-tree': LayerTree, 'map-canvas': MapCanvas, 'status-bar': StatusBar
}).forEach(([name, cls]) => customElements.define(name, cls));
</script>
</body>
</html>
